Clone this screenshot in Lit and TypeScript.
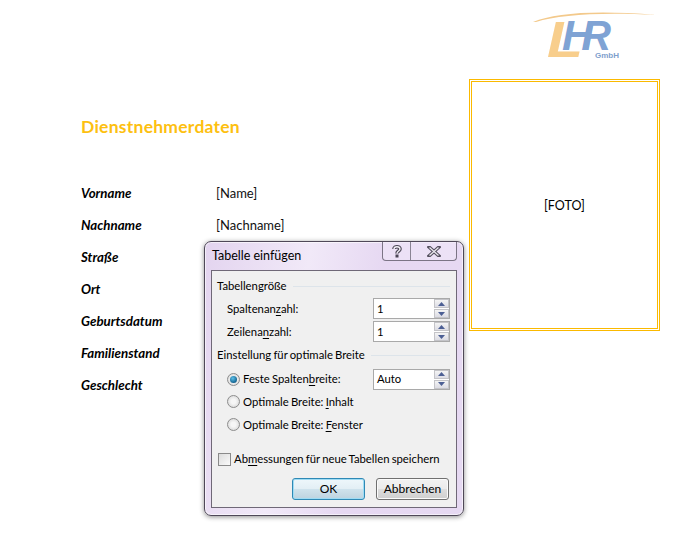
import { LitElement, html, css } from "lit";
import { customElement } from "lit/decorators.js";

const ROWS: [string, string][] = [
  ["Vorname", "[Name]"],
  ["Nachname", "[Nachname]"],
  ["Straße", ""],
  ["Ort", ""],
  ["Geburtsdatum", ""],
  ["Familienstand", ""],
  ["Geschlecht", ""],
];

@customElement("app-root")
export class AppRoot extends LitElement {
  static styles = css`
    :host { display: block; width: 685px; height: 539px; position: relative; overflow: hidden; background: #fff; font-family: "Lato", "Liberation Sans", sans-serif; color: #000; }
    .page { display: grid; grid-template-columns: 388px 191px; column-gap: 0; padding-left: 81px; height: 539px; box-sizing: border-box; }
    .left { padding-top: 116px; }
    h1 { margin: 0; height: 22px; font: 700 17.5px/22px "Lato", sans-serif; color: #fdc010; letter-spacing: 0.25px; }
    .rows { margin-top: 39px; display: grid; grid-template-columns: 135px 1fr; grid-auto-rows: 32px; align-items: center; font-size: 13.3px; }
    .label { font-weight: 700; font-style: italic; }
    .value { font-size: 13px; color: #111; }
    .logo { display: block; margin-left: 64px; width: 127px; height: 79px; overflow: visible; }
    .photo { box-sizing: border-box; width: 191px; height: 252px; border: 1px solid #fbb900; padding: 1px; background: #fff; }
    .photo-inner { box-sizing: border-box; height: 100%; border: 1px solid #fbb900; display: flex; align-items: center; justify-content: center; font-size: 12.5px; }

    .dialog { position: absolute; left: 204px; top: 241px; width: 260px; height: 275px; box-sizing: border-box; border: 1px solid #4f4858; border-radius: 7px; background: linear-gradient(100deg, #e3d4ef 0%, #f1e9f8 35%, #e6d8f2 60%, #e6d9f2 100%); box-shadow: 0 1px 5px rgba(0,0,0,.45), inset 0 0 0 1px rgba(255,255,255,.6); display: flex; flex-direction: column; font: 11.3px/16px "Lato", "Open Sans", sans-serif; word-spacing: -0.7px; color: #000; }
    .titlebar { height: 28px; flex: none; display: flex; justify-content: space-between; align-items: flex-start; padding: 0 6px 0 7px; }
    .title { font-size: 12.5px; line-height: 16px; margin-top: 6px; word-spacing: 0; }
    .caption { display: flex; height: 19px; width: 75px; box-sizing: border-box; border: 1px solid #7b7485; border-top: none; border-radius: 0 0 4px 4px; background: rgba(240,232,248,.6); }
    .cap { display: flex; align-items: center; justify-content: center; }
    .cap.help { width: 27px; border-right: 1px solid #8a8494; }
    .cap.close { flex: 1; }
    .panel { flex: 1; margin: 0 6px 7px 6px; box-sizing: border-box; border: 1px solid #6f6877; background: #f0f0f0; padding: 7px 6px 0 5px; display: flex; flex-direction: column; }
    .legend { display: flex; align-items: center; gap: 6px; height: 16px; }
    .legend::after { content: ""; flex: 1; height: 1px; background: #dde4ea; }
    .field { display: flex; justify-content: space-between; align-items: center; height: 23px; padding-left: 10px; }
    .first { margin-top: 3px; }
    .gap-legend { margin-top: 4px; }
    .spin { box-sizing: border-box; width: 77px; height: 21px; border: 1px solid #a9a9a9; background: #fff; display: flex; align-items: center; justify-content: space-between; padding-left: 3px; box-shadow: inset 0 0 0 1px #fff; }
    .arrows { width: 15px; height: 19px; display: flex; flex-direction: column; gap: 1px; }
    .arrows span { flex: 1; display: flex; align-items: center; justify-content: center; background: linear-gradient(#f4f4f4, #dcdce4); border: 1px solid #c4c4c8; box-sizing: border-box; }
    .opt { display: flex; align-items: center; gap: 3px; padding-left: 10px; }
    .radio { width: 11px; height: 11px; flex: none; border-radius: 50%; border: 1px solid #8d8d8d; background: radial-gradient(circle, #f6f6f6 30%, #cfcfcf 100%); display: flex; align-items: center; justify-content: center; }
    .radio.on i { display: block; width: 7px; height: 7px; border-radius: 50%; background: radial-gradient(circle at 40% 35%, #5cc0ea, #0f5e8a 75%); }
    .check { width: 11px; height: 11px; flex: none; border: 1px solid #8a8a8a; background: linear-gradient(135deg, #dcdcdc, #fafafa); }
    .row1 { margin-top: 5px; height: 22px; }
    .row1 .grow { display: flex; align-items: center; gap: 3px; }
    .rad { height: 23px; }
    .chk { margin-top: 15px; padding-left: 1px; gap: 3px; height: 16px; white-space: nowrap; }
    .buttons { display: flex; justify-content: flex-end; gap: 11px; margin-top: 11px; padding-right: 1px; font-size: 12px; }
    .btn { box-sizing: border-box; height: 22px; width: 73px; border: 1px solid #707070; border-radius: 3px; background: linear-gradient(#f2f2f2 0%, #ebebeb 48%, #dddddd 52%, #cfcfcf 100%); box-shadow: inset 0 0 0 1px #fbfbfb; display: flex; align-items: center; justify-content: center; }
    .btn.def { border-color: #2f89b5; box-shadow: inset 0 0 0 1px #9fdcf4; background: linear-gradient(#eef7fb 0%, #e3eff5 48%, #cfe2ec 52%, #bdd3df 100%); }
    u { text-decoration-thickness: 1px; text-underline-offset: 2px; }
  `;

  private arrows() {
    return html`<div class="arrows">
      <span><svg width="7" height="4"><path d="M3.5 0 7 4H0z" fill="#4c5f94"/></svg></span>
      <span><svg width="7" height="4"><path d="M0 0h7L3.5 4z" fill="#4c5f94"/></svg></span>
    </div>`;
  }

  render() {
    return html`
      <div class="page">
        <div class="left">
          <h1>Dienstnehmerdaten</h1>
          <div class="rows">
            ${ROWS.map(([l, v]) => html`<div class="label">${l}</div><div class="value">${v}</div>`)}
          </div>
        </div>
        <div class="right">
          <svg class="logo" viewBox="0 0 127 79">
            <path d="M0 22C22 13 62 10 123 15 66 12 26 15 3 22z" fill="#f3c98b"/>
            <text x="14" y="57" font-family="Liberation Sans" font-weight="700" font-style="italic" font-size="50" fill="#f8ce8c" textLength="36" lengthAdjust="spacingAndGlyphs">L</text>
            <text x="29" y="50" font-family="Liberation Sans" font-weight="700" font-style="italic" font-size="42" fill="#7fa3d4" textLength="31" lengthAdjust="spacingAndGlyphs">H</text>
            <text x="49" y="50" font-family="Liberation Sans" font-weight="700" font-style="italic" font-size="42" fill="#7fa3d4" textLength="29" lengthAdjust="spacingAndGlyphs">R</text>
            <text x="62" y="58" font-family="Liberation Sans" font-weight="700" font-size="8" fill="#7f9fcd" textLength="24">GmbH</text>
          </svg>
          <div class="photo"><div class="photo-inner">[FOTO]</div></div>
        </div>
      </div>
      <div class="dialog">
        <div class="titlebar">
          <div class="title">Tabelle einfügen</div>
          <div class="caption">
            <div class="cap help"><svg width="12" height="14" viewBox="0 0 12 14"><path d="M3 5C3 2 9 2 9 5c0 2-3 2-3 4.5" fill="none" stroke="#4a4554" stroke-width="3.6"/><path d="M3 5C3 2 9 2 9 5c0 2-3 2-3 4.5" fill="none" stroke="#f2eef6" stroke-width="1.4"/><rect x="4.5" y="10.5" width="3" height="3" fill="#4a4554"/></svg></div>
            <div class="cap close"><svg width="14" height="11" viewBox="0 0 14 11"><path d="M2 1l10 9M12 1L2 10" stroke="#55505f" stroke-width="3.4" stroke-linecap="square"/><path d="M2.5 1.5l9 8M11.5 1.5l-9 8" stroke="#eceaf0" stroke-width="1.2"/></svg></div>
          </div>
        </div>
        <div class="panel">
          <div class="legend">Tabellengröße</div>
          <div class="field first"><span>Spaltenan<u>z</u>ahl:</span><div class="spin"><span>1</span>${this.arrows()}</div></div>
          <div class="field"><span>Zeilena<u>n</u>zahl:</span><div class="spin"><span>1</span>${this.arrows()}</div></div>
          <div class="legend gap-legend">Einstellung für optimale Breite</div>
          <div class="field row1">
            <div class="grow"><span class="radio on"><i></i></span><span>Feste Spalten<u>b</u>reite:</span></div>
            <div class="spin"><span>Auto</span>${this.arrows()}</div>
          </div>
          <div class="opt rad"><span class="radio"></span><span>Optimale Breite: <u>I</u>nhalt</span></div>
          <div class="opt rad"><span class="radio"></span><span>Optimale Breite: <u>F</u>enster</span></div>
          <div class="opt chk"><span class="check"></span><span>Ab<u>m</u>essungen für neue Tabellen speichern</span></div>
          <div class="buttons"><div class="btn def">OK</div><div class="btn">Abbrechen</div></div>
        </div>
      </div>
    `;
  }
}
